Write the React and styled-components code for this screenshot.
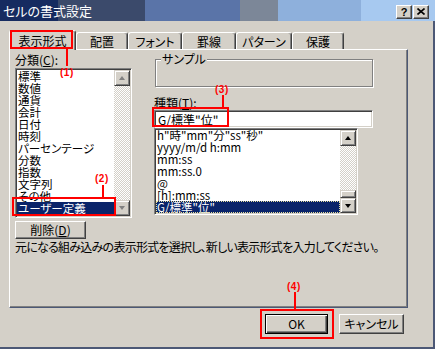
import React from "react";
import styled, { createGlobalStyle } from "styled-components";

const JP = `"Noto Sans CJK JP", "Noto Sans CJK SC", "Noto Sans", sans-serif`;
const DARK = "#404040";
const SHADOW = "#808080";
const FACE = "#d4d0c8";
const FRAME = "#4c5876";
const SEL = "#0a246a";
const RED = "#ff0000";

const GlobalStyle = createGlobalStyle`
  html, body { margin: 0; padding: 0; background: ${FACE}; }
  body { font-family: ${JP}; font-size: 12px; }
  *, *::before, *::after { box-sizing: border-box; }
`;

const Window = styled.div`
  position: relative;
  width: 435px;
  height: 349px;
  display: flex;
  flex-direction: column;
  background: ${FACE};
  overflow: hidden;
  font-family: ${JP};
  font-size: 12px;
  color: #000;
  font-feature-settings: "palt" 1;
`;

const TitleBar = styled.div`
  height: 21px;
  flex-shrink: 0;
  display: flex;
  align-items: center;
  padding: 0 6px 0 3px;
  background: linear-gradient(
    to right,
    #162b60 0 58px,
    #3b4a6b 58px 145px,
    #5a74a8 145px 240px,
    #7c8798 240px 278px,
    #8eb0dc 278px 361px,
    #a7c9f0 361px
  );
`;

const TitleText = styled.div`
  flex: 1;
  color: #fff;
  font-size: 13px;
  line-height: 21px;
  white-space: nowrap;
`;

const CaptionButtons = styled.div`
  display: flex;
  gap: 1px;
  margin-top: 2px;
`;

const CaptionButton = styled.div`
  width: 16px;
  height: 14px;
  background: ${FACE};
  border: 1px solid;
  border-color: #fff ${DARK} ${DARK} #fff;
  box-shadow: inset -1px -1px 0 ${SHADOW};
  display: flex;
  align-items: center;
  justify-content: center;
  font-family: "Liberation Sans", Arial, sans-serif;
  font-weight: bold;
  font-size: 11px;
  line-height: 12px;
`;

const Body = styled.div`
  flex: 1;
  display: flex;
  flex-direction: column;
  padding: 9px 25px 0 9px;
  border-right: 2px solid ${FRAME};
  border-bottom: 2px solid ${FRAME};
`;

const TabRow = styled.div`
  height: 19px;
  display: flex;
  align-items: flex-end;
  position: relative;
  z-index: 1;
`;

const Tab = styled.div`
  width: ${(p) => p.$w}px;
  height: ${(p) => (p.$active ? 20 : 17)}px;
  margin-bottom: ${(p) => (p.$active ? -1 : 0)}px;
  background: ${FACE};
  border-top: 1px solid #fff;
  border-left: 1px solid #fff;
  border-right: 1px solid ${DARK};
  box-shadow: inset -1px 0 0 ${SHADOW};
  border-radius: 3px 3px 0 0;
  display: flex;
  justify-content: center;
  align-items: ${(p) => (p.$active ? "flex-start" : "center")};
  padding-top: ${(p) => (p.$active ? 3 : 1)}px;
  line-height: 14px;
  white-space: nowrap;
`;

const Panel = styled.div`
  height: 259px;
  border: 1px solid;
  border-color: #fff ${FRAME} ${FRAME} #fff;
  box-shadow: inset -1px -1px 0 ${SHADOW};
  padding: 1px 0 0 5px;
  display: flex;
  flex-direction: column;
`;

const PanelTop = styled.div`
  display: flex;
  gap: 22px;
`;

const Column = styled.div`
  width: ${(p) => p.$w}px;
  display: flex;
  flex-direction: column;
`;

const FieldLabel = styled.div`
  height: ${(p) => p.$h}px;
  line-height: ${(p) => p.$h}px;
  margin-top: ${(p) => p.$mt || 0}px;
  white-space: nowrap;
  u { text-decoration: underline; text-underline-offset: 1px; }
`;

const ListBox = styled.div`
  width: ${(p) => p.$w}px;
  height: ${(p) => p.$h}px;
  background: #fff;
  border: 1px solid;
  border-color: ${SHADOW} #fff #fff ${SHADOW};
  box-shadow: inset 1px 1px 0 ${DARK}, inset -1px -1px 0 ${FACE};
  padding: 1px;
  display: flex;
`;

const ListItems = styled.div`
  flex: 1;
  min-width: 0;
  display: flex;
  flex-direction: column;
  justify-content: ${(p) => (p.$bottom ? "flex-end" : "flex-start")};
  overflow: hidden;
`;

const Item = styled.div`
  height: 12px;
  flex-shrink: 0;
  font-size: 11.5px;
  line-height: 12px;
  padding-left: 1px;
  white-space: nowrap;
  font-feature-settings: "palt" 1;
  background: ${(p) => (p.$sel ? SEL : "transparent")};
  color: ${(p) => (p.$sel ? "#fff" : "#000")};
  outline: ${(p) => (p.$focus ? "1px dotted #e8e0a0" : "none")};
  outline-offset: -1px;
`;

const ScrollBar = styled.div`
  width: 16px;
  flex-shrink: 0;
  display: flex;
  flex-direction: column;
  background-color: #fff;
  background-image: repeating-conic-gradient(${FACE} 0% 25%, #fff 0% 50%);
  background-size: 2px 2px;
`;

const Raised = styled.div`
  background: ${FACE};
  border: 1px solid;
  border-color: ${FACE} ${DARK} ${DARK} ${FACE};
  box-shadow: inset 1px 1px 0 #fff, inset -1px -1px 0 ${SHADOW};
`;

const ScrollBtn = styled(Raised)`
  height: ${(p) => p.$h || 16}px;
  flex-shrink: 0;
  display: flex;
  align-items: center;
  justify-content: center;
`;

const Arrow = styled.span`
  width: 0;
  height: 0;
  border-left: 3.5px solid transparent;
  border-right: 3.5px solid transparent;
  ${(p) =>
    p.$down
      ? `border-top: 4px solid ${p.$disabled ? SHADOW : "#000"};`
      : `border-bottom: 4px solid ${p.$disabled ? SHADOW : "#000"};`}
`;

const Track = styled.div`
  flex: 1;
`;

const Thumb = styled(Raised)`
  height: 8px;
  flex-shrink: 0;
`;

const Button = styled.div`
  width: ${(p) => p.$w}px;
  height: ${(p) => p.$h}px;
  margin-top: ${(p) => p.$mt || 0}px;
  background: ${FACE};
  border: 1px solid;
  border-color: ${(p) => (p.$default ? "#000" : `#fff ${DARK} ${DARK} #fff`)};
  box-shadow: ${(p) =>
    p.$default
      ? `inset 1px 1px 0 #fff, inset -1px -1px 0 ${DARK}, inset -2px -2px 0 ${SHADOW}`
      : `inset -1px -1px 0 ${SHADOW}`};
  display: flex;
  align-items: center;
  justify-content: center;
  white-space: nowrap;
  line-height: 14px;
  u { text-decoration: underline; text-underline-offset: 1px; }
`;

const Description = styled.div`
  margin-top: 1px;
  line-height: 14px;
  white-space: nowrap;
  letter-spacing: -0.75px;
`;

const GroupBox = styled.div`
  position: relative;
  margin: 8px 0 0 1px;
  width: 218px;
  height: 28px;
  border: 1px solid ${SHADOW};
  box-shadow: inset 1px 1px 0 #fff, 1px 1px 0 #fff;
`;

const GroupCaption = styled.span`
  position: absolute;
  left: 5px;
  top: -8px;
  padding: 0 1px;
  background: ${FACE};
  line-height: 14px;
`;

const TextInput = styled.div`
  width: 219px;
  height: 18px;
  background: #fff;
  border: 1px solid;
  border-color: ${SHADOW} #fff #fff ${SHADOW};
  box-shadow: inset 1px 1px 0 ${DARK}, inset -1px -1px 0 ${FACE};
  padding: 0 0 0 3px;
  display: flex;
  align-items: center;
  white-space: nowrap;
`;

const ButtonRow = styled.div`
  display: flex;
  justify-content: flex-end;
  gap: 11px;
  margin-top: 6px;
  padding-right: 4px;
`;

const AnnoBox = styled.div`
  position: absolute;
  left: ${(p) => p.$x}px;
  top: ${(p) => p.$y}px;
  width: ${(p) => p.$w}px;
  height: ${(p) => p.$h}px;
  border: 2px solid ${RED};
  pointer-events: none;
  z-index: 5;
`;

const AnnoLine = styled.div`
  position: absolute;
  left: ${(p) => p.$x}px;
  top: ${(p) => p.$y}px;
  width: 2px;
  height: ${(p) => p.$h}px;
  background: ${RED};
  z-index: 5;
`;

const AnnoLabel = styled.div`
  position: absolute;
  left: ${(p) => p.$x}px;
  top: ${(p) => p.$y}px;
  color: ${RED};
  font-family: "Liberation Sans", Arial, sans-serif;
  font-weight: bold;
  font-size: 10px;
  line-height: 11px;
  letter-spacing: 0.5px;
  z-index: 5;
`;

const categories = [
  "標準",
  "数値",
  "通貨",
  "会計",
  "日付",
  "時刻",
  "パーセンテージ",
  "分数",
  "指数",
  "文字列",
  "その他",
  "ユーザー定義",
];

const formats = [
  'h"時"mm"分"ss"秒"',
  "yyyy/m/d h:mm",
  "mm:ss",
  "mm:ss.0",
  "@",
  "[h]:mm:ss",
  'G/標準"位"',
];

const tabs = [
  { label: "表示形式", w: 67, active: true },
  { label: "配置", w: 52 },
  { label: "フォント", w: 54 },
  { label: "罫線", w: 54 },
  { label: "パターン", w: 56 },
  { label: "保護", w: 52 },
];

function CloseIcon() {
  return (
    <svg width="8" height="7" viewBox="0 0 8 7">
      <path d="M0.5 0.5 L7.5 6.5 M7.5 0.5 L0.5 6.5" stroke="#000" strokeWidth="1.6" />
    </svg>
  );
}

export default function App() {
  return (
    <>
      <GlobalStyle />
      <Window>
        <TitleBar>
          <TitleText>セルの書式設定</TitleText>
          <CaptionButtons>
            <CaptionButton>?</CaptionButton>
            <CaptionButton>
              <CloseIcon />
            </CaptionButton>
          </CaptionButtons>
        </TitleBar>
        <Body>
          <TabRow>
            {tabs.map((t) => (
              <Tab key={t.label} $w={t.w} $active={t.active}>
                {t.label}
              </Tab>
            ))}
          </TabRow>
          <Panel>
            <PanelTop>
              <Column $w={117}>
                <FieldLabel $h={17}>
                  分類(<u>C</u>):
                </FieldLabel>
                <ListBox $w={117} $h={150}>
                  <ListItems>
                    {categories.map((c) => (
                      <Item key={c} $sel={c === "ユーザー定義"}>
                        {c}
                      </Item>
                    ))}
                  </ListItems>
                  <ScrollBar>
                    <ScrollBtn>
                      <Arrow $disabled />
                    </ScrollBtn>
                    <Track />
                    <ScrollBtn>
                      <Arrow $down $disabled />
                    </ScrollBtn>
                  </ScrollBar>
                </ListBox>
                <Button $w={71} $h={18} $mt={3}>
                  削除(<u>D</u>)
                </Button>
              </Column>
              <Column $w={219}>
                <GroupBox>
                  <GroupCaption>サンプル</GroupCaption>
                </GroupBox>
                <FieldLabel $h={14} $mt={9}>
                  種類(<u>T</u>):
                </FieldLabel>
                <TextInput>G/標準"位"</TextInput>
                <ListBox $w={204} $h={87}>
                  <ListItems $bottom>
                    {formats.map((f, i) => (
                      <Item key={f} $sel={i === formats.length - 1} $focus={i === formats.length - 1}>
                        {f}
                      </Item>
                    ))}
                  </ListItems>
                  <ScrollBar>
                    <ScrollBtn>
                      <Arrow />
                    </ScrollBtn>
                    <Track />
                    <Thumb />
                    <ScrollBtn $h={15}>
                      <Arrow $down />
                    </ScrollBtn>
                  </ScrollBar>
                </ListBox>
              </Column>
            </PanelTop>
            <Description>
              元になる組み込みの表示形式を選択し、新しい表示形式を入力してください。
            </Description>
          </Panel>
          <ButtonRow>
            <Button $w={63} $h={20} $default>
              OK
            </Button>
            <Button $w={65} $h={20}>
              キャンセル
            </Button>
          </ButtonRow>
        </Body>

        <AnnoBox $x={10} $y={30} $w={63} $h={19} />
        <AnnoLine $x={66} $y={49} $h={17} />
        <AnnoLabel $x={60} $y={67}>(1)</AnnoLabel>

        <AnnoBox $x={12} $y={197} $w={104} $h={19} />
        <AnnoLine $x={102} $y={185} $h={12} />
        <AnnoLabel $x={95} $y={173}>(2)</AnnoLabel>

        <AnnoBox $x={152} $y={107} $w={77} $h={20} />
        <AnnoLine $x={222} $y={95} $h={12} />
        <AnnoLabel $x={215} $y={84}>(3)</AnnoLabel>

        <AnnoBox $x={260} $y={309} $w={74} $h={30} />
        <AnnoLine $x={294} $y={292} $h={17} />
        <AnnoLabel $x={287} $y={281}>(4)</AnnoLabel>
      </Window>
    </>
  );
}
